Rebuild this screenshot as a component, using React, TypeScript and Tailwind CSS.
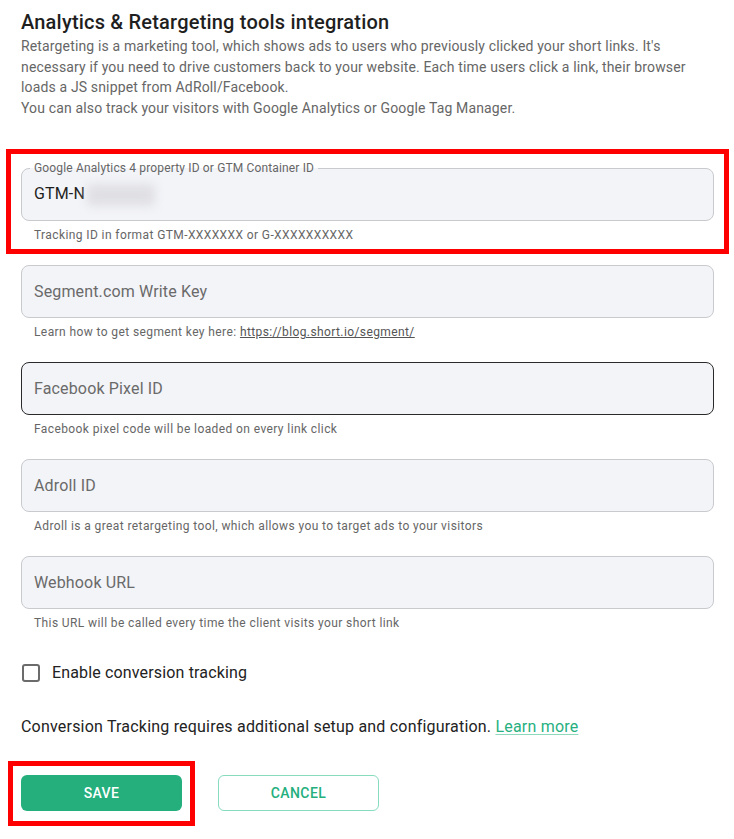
const fields = [
  {
    id: "segment",
    placeholder: "Segment.com Write Key",
    helper: (
      <>
        Learn how to get segment key here:{" "}
        <a href="#" className="underline text-[#555]">
          https://blog.short.io/segment/
        </a>
      </>
    ),
  },
  {
    id: "facebook",
    placeholder: "Facebook Pixel ID",
    helper: "Facebook pixel code will be loaded on every link click",
    active: true,
  },
  {
    id: "adroll",
    placeholder: "Adroll ID",
    helper: "Adroll is a great retargeting tool, which allows you to target ads to your visitors",
  },
  {
    id: "webhook",
    placeholder: "Webhook URL",
    helper: "This URL will be called every time the client visits your short link",
  },
];

function Field({
  placeholder,
  helper,
  active,
}: {
  placeholder: string;
  helper: React.ReactNode;
  active?: boolean;
}) {
  return (
    <div>
      <div
        className={`h-[53px] rounded-lg border bg-[#f3f4f8] flex items-center px-[12px] ${
          active ? "border-[#2a2a2a]" : "border-[#c9cace]"
        }`}
      >
        <input
          placeholder={placeholder}
          className="w-full bg-transparent outline-none text-base tracking-[0.15px] text-[#222] placeholder:text-[#6a6a6a]"
        />
      </div>
      <div className="mt-[6px] pl-[13px] text-xs leading-4 tracking-[0.4px] text-[#666]">{helper}</div>
    </div>
  );
}

export default function App() {
  return (
    <div
      className="bg-white min-h-[839px] pl-[21px] pt-[8px] text-[#222]"
      style={{ fontFamily: "Roboto, 'Liberation Sans', sans-serif" }}
    >
      <div className="w-[693px]">
        <h2 className="text-xl leading-7 font-medium tracking-[0.2px] text-[#1f1f1f]">
          Analytics &amp; Retargeting tools integration
        </h2>
        <p className="text-sm leading-[20.5px] tracking-[0.15px] text-[#666]">
          Retargeting is a marketing tool, which shows ads to users who previously clicked your short links. It's
          necessary if you need to drive customers back to your website. Each time users click a link, their browser
          loads a JS snippet from AdRoll/Facebook.
          <br />
          You can also track your visitors with Google Analytics or Google Tag Manager.
        </p>

        <div className="mt-[50px] flex flex-col gap-[22px]">
          {/* GA / GTM field, marked by the red frame */}
          <div className="relative">
            <div className="h-[53px] rounded-lg border border-[#c9cace] bg-[#f3f4f8] flex items-center px-[12px] relative">
              <span className="absolute -top-[9px] left-[8px] px-[4px] text-xs leading-4 tracking-[0.15px] text-[#666] bg-[linear-gradient(to_bottom,#fff_50%,#f3f4f8_50%)]">
                Google Analytics 4 property ID or GTM Container ID
              </span>
              <span className="text-base tracking-[0.15px] text-[#1f1f1f] -mt-[2px]">GTM-N</span>
              <span className="ml-[2px] h-[22px] w-[68px] rounded-sm bg-[#e0e0e4] blur-[5px]" />
            </div>
            <div className="mt-[6px] pl-[13px] text-xs leading-4 tracking-[0.4px] text-[#666]">
              Tracking ID in format GTM-XXXXXXX or G-XXXXXXXXXX
            </div>
            <div className="pointer-events-none absolute -left-[15px] -right-[15px] -top-[19px] -bottom-[11px] border-[5px] border-[#ff0000]" />
          </div>

          {fields.map((f) => (
            <Field key={f.id} placeholder={f.placeholder} helper={f.helper} active={f.active} />
          ))}
        </div>

        <label className="mt-[30px] h-[24px] flex items-center gap-[12px] pl-[1px]">
          <span className="w-[18px] h-[18px] rounded-[3px] border-2 border-[#6b6b6b]" />
          <span className="text-base tracking-[0.15px] text-[#222]">Enable conversion tracking</span>
        </label>

        <p className="mt-[30px] text-base leading-6 tracking-[0.2px] text-[#222]">
          Conversion Tracking requires additional setup and configuration.{" "}
          <a href="#" className="text-[#27b07f] underline decoration-[#8ed8bc] underline-offset-2">
            Learn more
          </a>
        </p>

        <div className="mt-[36px] flex gap-[36px]">
          <div className="relative">
            <button className="w-[161px] h-[36px] rounded-md bg-[#24af7d] text-white text-sm font-medium tracking-[0.4px]">
              SAVE
            </button>
            <div className="pointer-events-none absolute -left-[13px] -right-[13px] -top-[14px] -bottom-[15px] border-[5px] border-[#ff0000]" />
          </div>
          <button className="w-[161px] h-[36px] rounded-md border border-[#86dcbd] bg-white text-[#24af7d] text-sm font-medium tracking-[0.4px]">
            CANCEL
          </button>
        </div>
      </div>
    </div>
  );
}
